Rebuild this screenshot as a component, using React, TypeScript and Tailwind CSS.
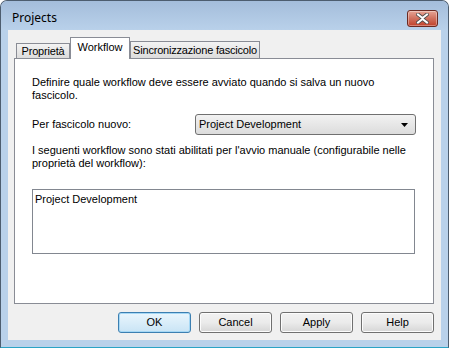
import React from 'react';

const ui = { fontFamily: 'Tahoma, "Liberation Sans", "DejaVu Sans", sans-serif' };

function CloseButton() {
  return (
    <div className="mt-[9px] mr-[10px] flex h-[17px] w-[31px] items-center justify-center rounded-[3px] border border-[#6b2a22] bg-gradient-to-b from-[#e6a495] via-[#d0705e] to-[#c13f29] shadow-[inset_0_0_0_1px_rgba(255,255,255,0.35)]">
      <svg width="13" height="11" viewBox="0 0 13 11">
        <path
          d="M2 1.5 L6.5 5 L11 1.5 M2 9.5 L6.5 6 L11 9.5"
          stroke="#4a4a4a"
          strokeWidth="3.6"
          strokeLinecap="square"
          fill="none"
        />
        <path
          d="M2 1.5 L6.5 5 L11 1.5 M2 9.5 L6.5 6 L11 9.5"
          stroke="#ffffff"
          strokeWidth="2"
          strokeLinecap="square"
          fill="none"
        />
      </svg>
    </div>
  );
}

function Tab({ label, active, cls }: { label: string; active?: boolean; cls: string }) {
  if (active) {
    return (
      <div className={`relative z-10 -mb-px flex items-start border border-b-0 border-[#898c95] bg-white text-[11px] leading-[13px] text-black ${cls}`}>
        {label}
      </div>
    );
  }
  return (
    <div
      className={`flex items-start border border-b-0 border-[#898c95] bg-gradient-to-b from-[#f3f3f3] to-[#dcdcdc] text-[11px] leading-[13px] tracking-[-0.2px] text-black ${cls}`}
    >
      {label}
    </div>
  );
}

function Button({ label, primary }: { label: string; primary?: boolean }) {
  return (
    <div
      className={`flex h-[21px] w-[73px] items-center justify-center rounded-[3px] border text-[11px] text-black ${
        primary
          ? 'border-[#3c7fb1] bg-gradient-to-b from-[#eaf6fd] to-[#c9e4f5] shadow-[inset_0_0_0_1px_#a6d8f5]'
          : 'border-[#707070] bg-gradient-to-b from-[#f2f2f2] via-[#ebebeb] to-[#d6d6d6] shadow-[inset_0_0_0_1px_#fcfcfc]'
      }`}
    >
      {label}
    </div>
  );
}

export default function App() {
  return (
    <div className="h-[348px] w-[449px] bg-white" style={ui}>
      <div className="flex h-[348px] w-[449px] flex-col rounded-t-[7px] border border-[#4d5d6f] border-b-[#2aa3c5] bg-[#b9d1ea]">
        {/* title bar */}
        <div className="flex h-[29px] items-start justify-between rounded-t-[6px] bg-gradient-to-b from-[#a4bddb] to-[#b9d1ea]">
          <span
            className="pl-[11px] pt-[8px] text-[12px] text-black"
            style={{ fontFamily: '"Noto Sans", "Open Sans", sans-serif' }}
          >
            Projects
          </span>
          <CloseButton />
        </div>

        {/* client area */}
        <div className="mx-[7px] flex h-[310px] flex-col bg-[#f0f0f0] pl-[6px]">
          <div className="flex h-[28px] items-end pl-[2px] pt-[7px]">
            <Tab label="Proprietà" cls="h-[15px] w-[54px] justify-center pt-[1px]" />
            <Tab label="Workflow" active cls="h-[22px] w-[60px] justify-center pt-[3px]" />
            <Tab label="Sincronizzazione fascicolo" cls="h-[17px] w-[130px] justify-center pt-[2px]" />
          </div>

          <div className="flex h-[246px] w-[420px] flex-col border border-[#898c95] bg-white pl-[17px] text-[11px] leading-[13px] text-black">
            <p className="mt-[17px] w-[360px]">
              Definire quale workflow deve essere avviato quando si salva un nuovo fascicolo.
            </p>

            <div className="mt-[12px] flex h-[21px] items-center">
              <span className="w-[163px]">Per fascicolo nuovo:</span>
              <div className="flex h-[21px] w-[221px] items-center justify-between rounded-[3px] border border-[#707070] bg-gradient-to-b from-[#f2f2f2] to-[#dcdcdc] pl-[3px] pr-[7px]">
                <span>Project Development</span>
                <svg width="7" height="4" viewBox="0 0 7 4">
                  <path d="M0 0 H7 L3.5 4 Z" fill="#000" />
                </svg>
              </div>
            </div>

            <p className="mt-[9px] w-[390px]">
              I seguenti workflow sono stati abilitati per l'avvio manuale (configurabile nelle
              proprietà del workflow):
            </p>

            <div className="mt-[19px] h-[65px] w-[383px] border border-[#828790] bg-white px-[2px] pt-[3px]">
              Project Development
            </div>
          </div>

          <div className="mt-[8px] flex w-[420px] justify-end gap-[8px]">
            <Button label="OK" primary />
            <Button label="Cancel" />
            <Button label="Apply" />
            <Button label="Help" />
          </div>
        </div>
      </div>
    </div>
  );
}
